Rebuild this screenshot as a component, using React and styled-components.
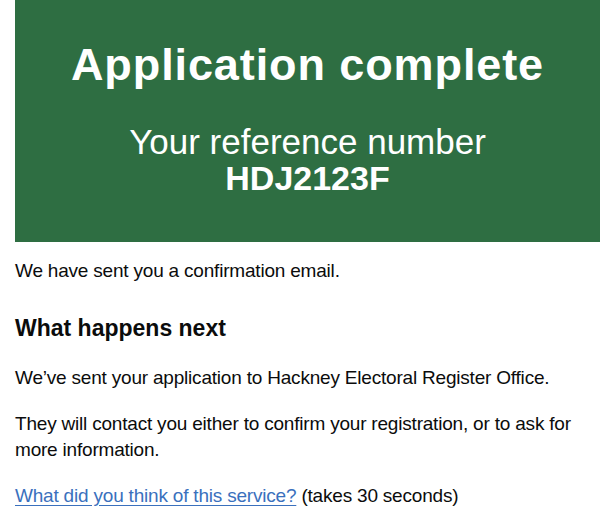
import React from 'react';
import styled, { createGlobalStyle } from 'styled-components';

const GlobalStyle = createGlobalStyle`
  body {
    margin: 0;
    background: #ffffff;
    color: #0b0c0c;
    font-family: "Liberation Sans", Arial, sans-serif;
  }
`;

const Page = styled.main`
  padding: 0 5px 0 15px;
`;

const Panel = styled.div`
  background-color: #2e6e42;
  color: #ffffff;
  text-align: center;
  padding: 40px 20px 0;
  height: 242px;
  box-sizing: border-box;
`;

const PanelTitle = styled.h1`
  margin: 0 0 33px;
  font-size: 45px;
  line-height: 50px;
  letter-spacing: 0.9px;
  font-weight: 700;
`;

const PanelBody = styled.div`
  font-size: 35px;
  line-height: 37px;
`;

const Reference = styled.strong`
  display: block;
  font-size: 34px;
  font-weight: 700;
`;

const Body = styled.p`
  margin: 0 0 ${(p) => p.$gap || 20}px;
  font-size: 19px;
  line-height: 26px;
  letter-spacing: -0.2px;
`;

const Heading = styled.h2`
  margin: 0 0 22px;
  font-size: 23px;
  line-height: 30px;
  font-weight: 700;
`;

const Link = styled.a`
  color: #3a70bd;
  text-decoration: underline;
  text-underline-offset: 3px;
`;

const Content = styled.div`
  padding-top: 16px;
`;

export default function App() {
  return (
    <>
      <GlobalStyle />
      <Page>
        <Panel>
          <PanelTitle>Application complete</PanelTitle>
          <PanelBody>
            Your reference number
            <Reference>HDJ2123F</Reference>
          </PanelBody>
        </Panel>
        <Content>
          <Body $gap={29}>We have sent you a confirmation email.</Body>
          <Heading>What happens next</Heading>
          <Body>We’ve sent your application to Hackney Electoral Register Office.</Body>
          <Body>
            They will contact you either to confirm your registration, or to ask for more information.
          </Body>
          <Body>
            <Link href="#">What did you think of this service?</Link> (takes 30 seconds)
          </Body>
        </Content>
      </Page>
    </>
  );
}
